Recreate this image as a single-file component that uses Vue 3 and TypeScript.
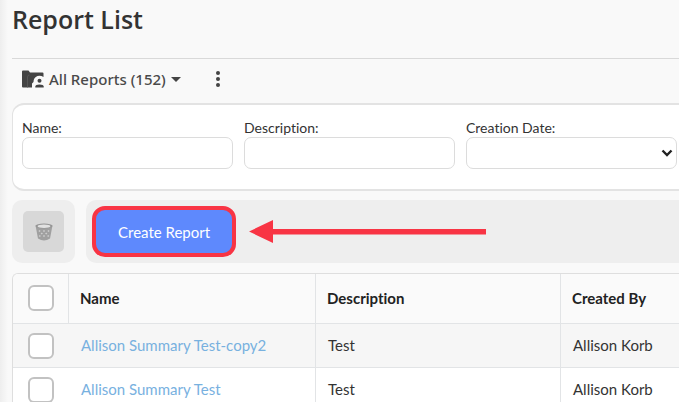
<script setup lang="ts">
import { ref } from 'vue'

interface Report {
  id: number
  name: string
  description: string
  createdBy: string
}

const reports: Report[] = [
  { id: 1, name: 'Allison Summary Test-copy2', description: 'Test', createdBy: 'Allison Korb' },
  { id: 2, name: 'Allison Summary Test', description: 'Test', createdBy: 'Allison Korb' },
]

const total = 152
const nameFilter = ref('')
const descriptionFilter = ref('')
const dateFilter = ref('')
const selected = ref<number[]>([])

function toggleAll(event: Event) {
  const checked = (event.target as HTMLInputElement).checked
  selected.value = checked ? reports.map((r) => r.id) : []
}
</script>

<template>
  <main class="page">
    <h1 class="title">Report List</h1>

    <div class="views">
      <button class="view-picker" type="button">
        <svg class="folder" viewBox="0 0 22 18" aria-hidden="true">
          <path d="M0 1.500Q0 0.500 1 0.500H6.500l1.500 2h12.500Q21.500 2.500 21.500 3.500V7Q18.500 5 15.500 6Q11.500 7.500 11.500 12L10 13.500V17.500H1Q0 17.500 0 16.500Z" fill="#444" />
          <path d="M5.500 17.500V7Q5.500 5 7.500 5" fill="none" stroke="#5c5c5c" stroke-width="0.800" />
          <circle cx="17.500" cy="10.700" r="2" fill="#444" />
          <path d="M13.300 17.500v-1q0-2 4.200-2t4.200 2v1z" fill="#444" />
        </svg>
        <span>All Reports ({{ total }})</span>
        <svg class="caret" viewBox="0 0 10 5" aria-hidden="true"><path d="M0 0h10L5 5z" fill="#444" /></svg>
      </button>
      <button class="more" type="button" aria-label="More options">
        <svg viewBox="0 0 4 16" aria-hidden="true">
          <g fill="#444"><circle cx="2" cy="2" r="2" /><circle cx="2" cy="8" r="2" /><circle cx="2" cy="14" r="2" /></g>
        </svg>
      </button>
    </div>

    <form class="filters" @submit.prevent>
      <div class="field">
        <label for="filter-name">Name:</label>
        <input id="filter-name" v-model="nameFilter" type="text" />
      </div>
      <div class="field">
        <label for="filter-description">Description:</label>
        <input id="filter-description" v-model="descriptionFilter" type="text" />
      </div>
      <div class="field">
        <label for="filter-date">Creation Date:</label>
        <div class="select-wrap">
          <select id="filter-date" v-model="dateFilter">
            <option value=""></option>
          </select>
          <svg class="chevron" viewBox="0 0 12 8" aria-hidden="true">
            <path d="M1.500 1.500L6 6l4.500-4.500" fill="none" stroke="#222" stroke-width="2.400" />
          </svg>
        </div>
      </div>
    </form>

    <div class="actions">
      <div class="group delete-group">
        <button class="delete" type="button" aria-label="Delete" disabled>
          <svg viewBox="0 0 18 18" aria-hidden="true">
            <path d="M0.500 2.500L3 15.500Q9 19.500 15 15.500L17.500 2.500Z" fill="#a0a0a0" />
            <ellipse cx="9" cy="3" rx="8.500" ry="2.600" fill="#969696" />
            <ellipse cx="9" cy="3.300" rx="6.400" ry="1.700" fill="#e2e2e2" />
            <g fill="#d0d0d0">
              <path d="M4.500 6.900l1.100 1.100-1.100 1.100-1.100-1.100zM9 6.900l1.100 1.100L9 9.100 7.900 8zM13.500 6.900l1.100 1.100-1.100 1.100L12.400 8z" />
              <path d="M6.800 9.400l1.100 1.100-1.100 1.100-1.100-1.100zM11.200 9.400l1.100 1.100-1.100 1.100-1.100-1.100z" />
              <path d="M4.800 11.900L5.900 13l-1.100 1.100L3.800 13zM9 11.900l1.100 1.100L9 14.100 7.900 13zM13.200 11.900l1 1.100-1 1.100L12.100 13z" />
            </g>
          </svg>
        </button>
      </div>
      <div class="group create-group">
        <button class="create" type="button">Create Report</button>
        <svg class="arrow" viewBox="0 0 238 24" aria-hidden="true">
          <path d="M0 11.500L24 0v9h213v5.500H24V23z" fill="#f83444" />
        </svg>
      </div>
    </div>

    <div class="table-frame">
      <table>
        <colgroup>
          <col class="col-check" />
          <col class="col-name" />
          <col class="col-description" />
          <col />
        </colgroup>
        <thead>
          <tr>
            <th class="check">
              <input type="checkbox" aria-label="Select all reports" :checked="selected.length === reports.length" @change="toggleAll" />
            </th>
            <th>Name</th>
            <th>Description</th>
            <th>Created By</th>
          </tr>
        </thead>
        <tbody>
          <tr v-for="report in reports" :key="report.id">
            <td class="check">
              <input v-model="selected" type="checkbox" :value="report.id" :aria-label="`Select ${report.name}`" />
            </td>
            <td><a href="#">{{ report.name }}</a></td>
            <td>{{ report.description }}</td>
            <td>{{ report.createdBy }}</td>
          </tr>
        </tbody>
      </table>
    </div>
  </main>
</template>

<style>
body {
  margin: 0;
  background: #f9f9f9;
}
</style>

<style scoped>
.page {
  box-sizing: border-box;
  height: 100vh;
  overflow: hidden;
  padding-left: 12px;
  background: linear-gradient(to right, #eeeeee, #f9f9f9 8px);
  color: #333;
  font-family: Lato, sans-serif;
  font-size: 15px;
  font-variant-ligatures: none;
}

button {
  border: 0;
  padding: 0;
  background: none;
  color: inherit;
  font: inherit;
}

.title {
  margin: 0;
  padding: 3px 0 23px;
  border-bottom: 1px solid #d9d9d9;
  color: #333;
  font: 600 25px/32px "Open Sans", sans-serif;
}

.views {
  display: flex;
  align-items: center;
  gap: 35px;
  height: 40px;
  padding: 0 10px 4px;
}

.view-picker {
  display: flex;
  align-items: center;
  gap: 5px;
  height: 40px;
  color: #4a4a4a;
  font: 500 15px/20px "Noto Sans", sans-serif;
}

.folder {
  width: 22px;
  height: 18px;
}

.caret {
  width: 10px;
  height: 5px;
}

.more {
  display: flex;
}

.more svg {
  width: 4px;
  height: 16px;
}

.filters {
  display: grid;
  grid-template-columns: repeat(3, 1fr);
  gap: 11px;
  padding: 15px 2px 20px 9px;
  border: 2px solid #e3e3e3;
  border-width: 2px 0 2px 1px;
  border-radius: 12px 0 0 12px;
  background: #fff;
}

.field label {
  display: block;
  padding-bottom: 1px;
  color: #333;
  font-size: 14px;
  line-height: 16px;
}

.field input,
.field select {
  display: block;
  box-sizing: border-box;
  width: 100%;
  height: 32px;
  padding: 0 8px;
  border: 1px solid #dcdcdc;
  border-radius: 7px;
  background: #fff;
  color: inherit;
  font: inherit;
  appearance: none;
}

.select-wrap {
  position: relative;
}

.chevron {
  position: absolute;
  top: 12px;
  right: 4px;
  width: 12px;
  height: 8px;
  pointer-events: none;
}

.actions {
  display: flex;
  gap: 11px;
  padding: 9px 0 10px;
}

.group {
  display: flex;
  align-items: center;
  height: 63px;
  border-radius: 10px;
  background: #eee;
}

.delete-group {
  padding: 0 11px;
}

.create-group {
  flex: 1;
  gap: 13px;
  padding-left: 6px;
  border-radius: 10px 0 0 10px;
}

.delete {
  display: grid;
  place-items: center;
  width: 41px;
  height: 41px;
  border-radius: 5px;
  background: #d8d8d8;
}

.delete svg {
  width: 18px;
  height: 18px;
}

.create {
  height: 51px;
  padding: 0 22px;
  border: 4px solid #f83444;
  border-radius: 13px;
  background: #5e89fd;
  color: #fff;
}

.arrow {
  width: 238px;
  height: 24px;
}

.table-frame {
  overflow: hidden;
  border: 1px solid #dedede;
  border-right: 0;
  border-radius: 6px 0 0 0;
}

table {
  width: 100%;
  border-collapse: separate;
  border-spacing: 0;
  table-layout: fixed;
}

.col-check {
  width: 56px;
}

.col-name {
  width: 247px;
}

.col-description {
  width: 245px;
}

th,
td {
  box-sizing: border-box;
  padding: 0 12px 2px;
  border-bottom: 1px solid #e2e4e6;
  text-align: left;
  white-space: nowrap;
}

th {
  height: 50px;
  padding: 0 11px 2px;
  background: #fafafa;
  color: #222;
  font-weight: 700;
}

td {
  height: 44px;
  background: #fff;
}

th:not(:last-child),
td:not(:first-child):not(:last-child) {
  border-right: 1px solid #e2e4e6;
}

tbody tr:nth-child(odd) td {
  background: #f6f6f6;
}

.check {
  padding: 0 15px;
}

th.check {
  padding: 0 15px 2px;
}

.check input {
  display: block;
  box-sizing: border-box;
  width: 26px;
  height: 26px;
  margin: 0;
  border: 2px solid #c2c2c2;
  border-radius: 6px;
  background: #fff;
  appearance: none;
}

.check input:checked {
  background: #5e89fd;
}

a {
  color: #78b1df;
  text-decoration: none;
}
</style>
